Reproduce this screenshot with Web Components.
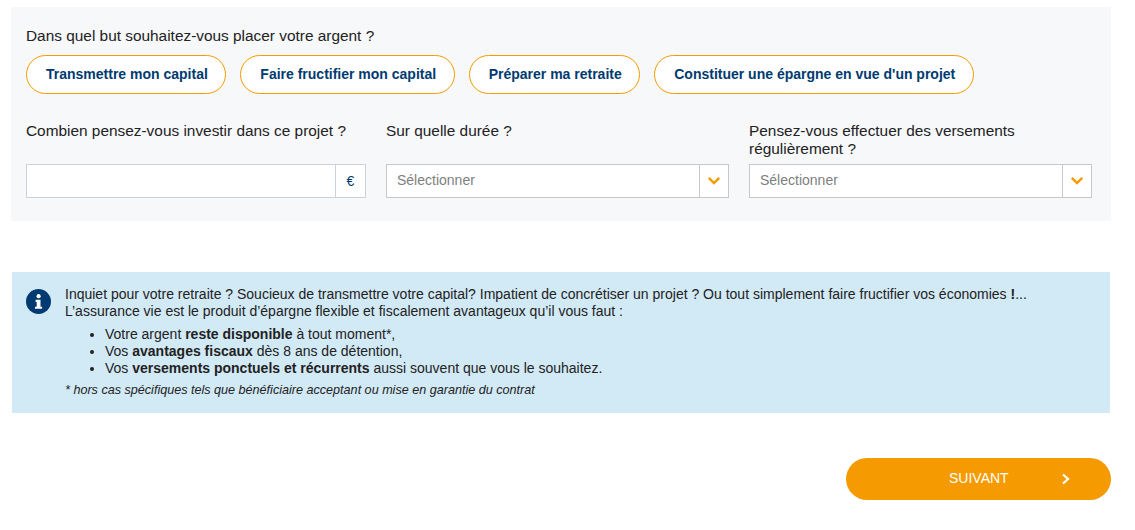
<!DOCTYPE html>
<html lang="fr">
<head>
<meta charset="utf-8">
<title>Simulation</title>
<style>
  html, body { margin: 0; padding: 0; background: #fff; }
  body { font-family: "Liberation Sans", Arial, sans-serif; font-size: 14px; color: #222; }
  .page { width: 1100px; padding: 7px 0 0 11px; }
</style>
</head>
<body>
<div class="page">
  <goal-panel>
    <span slot="question">Dans quel but souhaitez-vous placer votre argent ?</span>
    <pill-button>Transmettre mon capital</pill-button>
    <pill-button>Faire fructifier mon capital</pill-button>
    <pill-button>Préparer ma retraite</pill-button>
    <pill-button>Constituer une épargne en vue d'un projet</pill-button>
    <form-field slot="fields" label="Combien pensez-vous investir dans ce projet ?" kind="amount"></form-field>
    <form-field slot="fields" label="Sur quelle durée ?" kind="select"></form-field>
    <form-field slot="fields" label="Pensez-vous effectuer des versements régulièrement ?" kind="select"></form-field>
  </goal-panel>
  <info-box>
    <p>Inquiet pour votre retraite ? Soucieux de transmettre votre capital? Impatient de concrétiser un projet ? Ou tout simplement faire fructifier vos économies <b>!</b>...<br>L’assurance vie est le produit d’épargne flexible et fiscalement avantageux qu’il vous faut :</p>
    <ul>
      <li>Votre argent <b>reste disponible</b> à tout moment*,</li>
      <li>Vos <b>avantages fiscaux</b> dès 8 ans de détention,</li>
      <li>Vos <b>versements ponctuels et récurrents</b> aussi souvent que vous le souhaitez.</li>
    </ul>
    <small>* hors cas spécifiques tels que bénéficiaire acceptant ou mise en garantie du contrat</small>
  </info-box>
  <next-button>SUIVANT</next-button>
</div>

<script>
const goalPanelTemplate = document.createElement('template');
goalPanelTemplate.innerHTML = `
  <style>
  :host{
    display: block;
    width: 1100px;
    height: 214px;
    box-sizing: border-box;
    padding: 20px 19px 0 15px;
    background: #f7f8fa;
    line-height: 18px;
  }
  .question{ font-size: 15.4px; }
  .pills{
    display: flex;
    gap: 14px;
    margin-top: 10px;
  }
  .fields{
    display: grid;
    grid-template-columns: 340px 343px 343px;
    column-gap: 20px;
    margin-top: 28px;
  }
  </style>
  <div class="question"><slot name="question"></slot></div>
  <div class="pills"><slot></slot></div>
  <div class="fields"><slot name="fields"></slot></div>
`;

class GoalPanel extends HTMLElement{
    constructor(){
        super();
        this.attachShadow({mode: 'open'});
        this.shadowRoot.appendChild(goalPanelTemplate.content.cloneNode(true));
    }
}

const pillButtonTemplate = document.createElement('template');
pillButtonTemplate.innerHTML = `
  <style>
  :host{
    display: flex;
    align-items: center;
    height: 39px;
    box-sizing: border-box;
    padding: 0 17.5px 2px 19px;
    background: #fff;
    border: 1px solid #f59a00;
    border-radius: 20px;
    color: #003a70;
    font-weight: 700;
    font-size: 14px;
    white-space: nowrap;
    cursor: pointer;
  }
  </style>
  <slot></slot>
`;

class PillButton extends HTMLElement{
    constructor(){
        super();
        this.attachShadow({mode: 'open'});
        this.shadowRoot.appendChild(pillButtonTemplate.content.cloneNode(true));
    }
}

const formFieldTemplate = document.createElement('template');
formFieldTemplate.innerHTML = `
  <style>
  :host{
    display: grid;
    grid-template-rows: 42px 34px;
    line-height: 18px;
  }
  .label{ font-size: 15.4px; }
  .box{
    display: flex;
    align-items: stretch;
    box-sizing: border-box;
    height: 34px;
    background: #fff;
    border: 1px solid #c8c8c8;
  }
  .box.amount{ border-color: #ccd2dc; }
  .value{
    flex: 1;
    display: flex;
    align-items: center;
    padding-left: 10px;
    color: #808080;
    padding-bottom: 2px;
  }
  .addon{
    display: flex;
    align-items: center;
    justify-content: center;
    width: 28px;
    border-left: 1px solid #c8c8c8;
    color: #003a70;
    font-size: 14px;
  }
  .amount .addon{ width: 29px; border-color: #ccd2dc; }
  svg{ display: block; }
  </style>
  <div class="label"></div>
  <div class="box"></div>
`;

class FormField extends HTMLElement{
    constructor(){
        super();
        this.attachShadow({mode: 'open'});
        this.shadowRoot.appendChild(formFieldTemplate.content.cloneNode(true));
    }

    connectedCallback(){
        this.shadowRoot.querySelector('.label').textContent = this.getAttribute('label');
        const box = this.shadowRoot.querySelector('.box');
        if(this.getAttribute('kind') === 'amount'){
            box.classList.add('amount');
            box.innerHTML = `<div class="value"></div><div class="addon">€</div>`;
        }else{
            box.innerHTML = `<div class="value">Sélectionner</div>
              <div class="addon"><svg width="14" height="10" viewBox="0 0 14 10"><path d="M1.8 1.8L7 7l5.2-5.2" fill="none" stroke="#f59a00" stroke-width="2.4"/></svg></div>`;
        }
    }
}

const infoBoxTemplate = document.createElement('template');
infoBoxTemplate.innerHTML = `
  <style>
  :host{
    display: flex;
    width: 1098px;
    height: 141px;
    box-sizing: border-box;
    margin: 51px 0 0 1px;
    padding: 14px 14px 0 14px;
    gap: 14px;
    background: #d2e9f6;
    line-height: 17px;
  }
  svg{ flex: none; display: block; margin-top: 3px; }
  ::slotted(p){ margin: 0; }
  ::slotted(ul){ margin: 6px 0 5px; padding-left: 40px; }
  ::slotted(small){ display: block; font-size: 12.6px; font-style: italic; }
  </style>
  <svg width="25" height="25" viewBox="0 0 25 25">
    <circle cx="12.5" cy="12.5" r="12.5" fill="#003a70"/>
    <circle cx="12.6" cy="7.2" r="2.1" fill="#fff"/>
    <path d="M9.6 10.8h4.9v6.9h1.6v2.1H9v-2.1h1.7v-4.8H9.6z" fill="#fff"/>
  </svg>
  <div><slot></slot></div>
`;

class InfoBox extends HTMLElement{
    constructor(){
        super();
        this.attachShadow({mode: 'open'});
        this.shadowRoot.appendChild(infoBoxTemplate.content.cloneNode(true));
    }
}

const nextButtonTemplate = document.createElement('template');
nextButtonTemplate.innerHTML = `
  <style>
  :host{
    display: flex;
    align-items: center;
    width: 265px;
    height: 42px;
    box-sizing: border-box;
    margin: 45px 0 0 835px;
    background: #f59a00;
    border-radius: 21px;
    color: #fff;
    font-size: 14px;
    cursor: pointer;
  }
  span{ margin: -3px 0 0 103px; width: 111px; }
  svg{ display: block; }
  </style>
  <span><slot></slot></span>
  <svg width="12" height="12" viewBox="0 0 12 12"><path d="M3 1.5L8 6l-5 4.5" fill="none" stroke="#fff" stroke-width="2.2"/></svg>
`;

class NextButton extends HTMLElement{
    constructor(){
        super();
        this.attachShadow({mode: 'open'});
        this.shadowRoot.appendChild(nextButtonTemplate.content.cloneNode(true));
    }
}

window.customElements.define('goal-panel', GoalPanel);
window.customElements.define('pill-button', PillButton);
window.customElements.define('form-field', FormField);
window.customElements.define('info-box', InfoBox);
window.customElements.define('next-button', NextButton);
</script>
</body>
</html>
